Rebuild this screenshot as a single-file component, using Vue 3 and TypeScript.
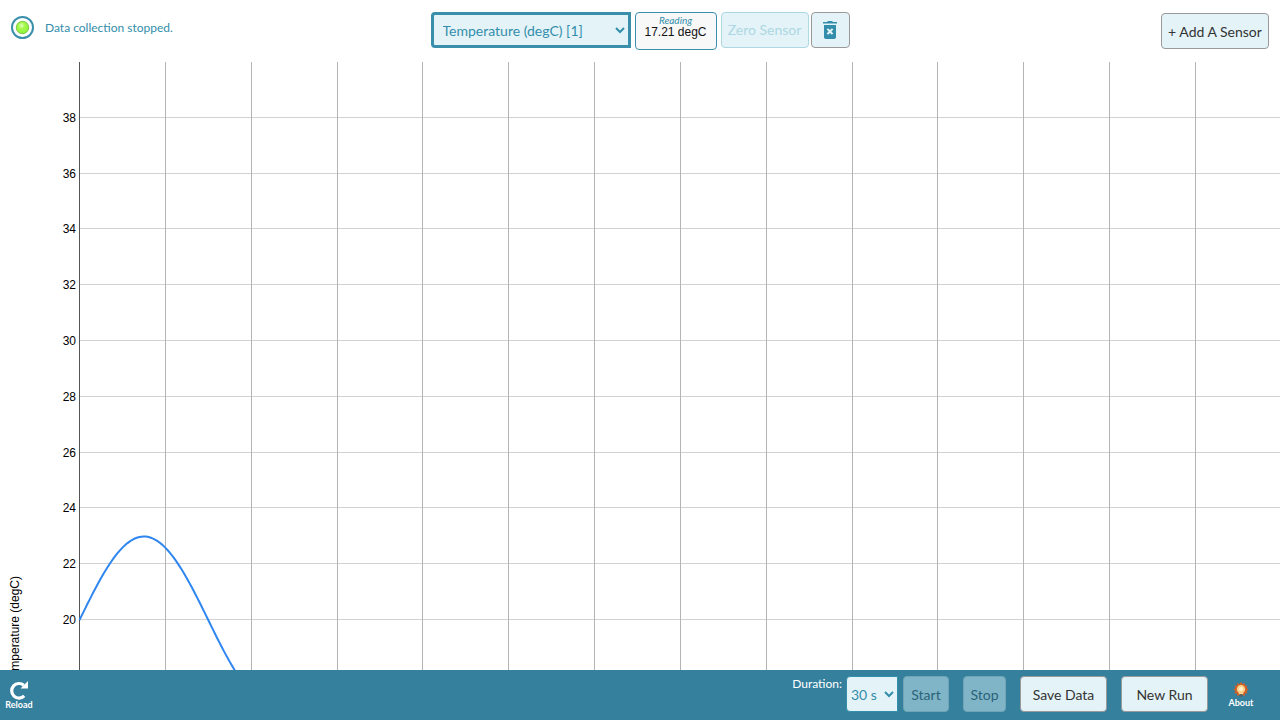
<script setup lang="ts">
import { ref } from 'vue'

const channel = ref('Temperature (degC) [1]')
const duration = ref('30 s')

const rows = Array.from({ length: 10 }, (_, i) => ({
  label: 38 - i * 2,
  y: Math.round(54.8 + i * 55.8) + 0.5,
}))
const columns = Array.from({ length: 30 }, (_, i) => Math.round(79.1 + i * 85.83) + 0.5)

const points: string[] = []
for (let x = 0; x <= 190; x += 2) {
  const y = 558 - 83.5 * Math.sin((x / 257.5) * Math.PI * 2)
  points.push(`${79.5 + x},${y.toFixed(2)}`)
}
const curve = points.join(' ')

const burst = Array.from({ length: 24 }, (_, i) => {
  const a = (i * Math.PI) / 12
  const r = i % 2 ? 5.8 : 7.6
  return `${(8 + r * Math.sin(a)).toFixed(2)},${(7.5 - r * Math.cos(a)).toFixed(2)}`
}).join(' ')
</script>

<template>
  <div class="app">
    <header class="top">
      <div class="status">
        <svg class="lamp" viewBox="0 0 24 24" aria-hidden="true">
          <defs>
            <radialGradient id="lampGlow" cx="0.42" cy="0.35" r="0.65">
              <stop offset="0" stop-color="#e4ffc4" />
              <stop offset="0.4" stop-color="#a4fa4c" />
              <stop offset="1" stop-color="#8ff03a" />
            </radialGradient>
          </defs>
          <circle cx="11.500" cy="11.500" r="10.500" fill="#fff" stroke="#3a8fab" stroke-width="2" />
          <circle cx="11.500" cy="11.500" r="6.200" fill="url(#lampGlow)" stroke="#7fc545" stroke-width="1" />
        </svg>
        <span>Data collection stopped.</span>
      </div>

      <div class="sensor">
        <select v-model="channel" class="channel" aria-label="Sensor channel">
          <option>Temperature (degC) [1]</option>
        </select>
        <div class="reading">
          <em>Reading</em>
          <span>17.21 degC</span>
        </div>
        <button class="btn zero" disabled>Zero Sensor</button>
        <button class="btn remove" aria-label="Remove sensor">
          <svg viewBox="0 0 16 20" aria-hidden="true">
            <path fill="#338eab" fill-rule="evenodd" d="M1 2h4l1-1h4l1 1h4v1.600H1zM2 5h12v12.200a1.800 1.800 0 0 1-1.800 1.800H3.800A1.800 1.800 0 0 1 2 17.200zM6.100 8.200 4.700 9.600 6.600 11.500 4.700 13.400 6.100 14.800 8 12.900 9.900 14.800 11.300 13.400 9.400 11.500 11.300 9.600 9.900 8.200 8 10.100z" />
          </svg>
        </button>
      </div>

      <button class="btn add">+ Add A Sensor</button>
    </header>

    <main class="plot">
      <svg class="chart" role="img" aria-label="Temperature (degC) chart">
        <g class="rows">
          <line v-for="r in rows" :key="r.label" x1="80" x2="100%" :y1="r.y" :y2="r.y" />
        </g>
        <g class="columns">
          <line v-for="x in columns" :key="x" :x1="x" :x2="x" y1="0" y2="100%" />
        </g>
        <line class="axis" x1="79.5" x2="79.5" y1="0" y2="100%" />
        <g class="labels">
          <text v-for="r in rows" :key="r.label" x="76" :y="r.y + 4">{{ r.label }}</text>
        </g>
        <text class="title" transform="translate(19 514) rotate(-90)">Temperature (degC)</text>
        <polyline class="curve" :points="curve" />
      </svg>
    </main>

    <footer class="bottom">
      <button class="tool reload">
        <svg viewBox="0 0 20 20" aria-hidden="true">
          <path d="M15.200 15.900A7.300 7.300 0 1 1 14.800 5.300" fill="none" stroke="#fff" stroke-width="3.200" />
          <path d="M19 1v7.500h-7.500z" fill="#fff" />
        </svg>
        <span>Reload</span>
      </button>
      <div class="controls">
        <label for="duration">Duration:</label>
        <select id="duration" v-model="duration" class="duration">
          <option>30 s</option>
        </select>
        <button class="btn start" disabled>Start</button>
        <button class="btn stop" disabled>Stop</button>
        <button class="btn wide">Save Data</button>
        <button class="btn wide">New Run</button>
        <button class="tool about">
          <svg viewBox="0 0 16 16" aria-hidden="true">
            <polygon :points="burst" fill="#d0602a" />
            <path d="M8 3a4.200 4.200 0 0 0-2.200 7.700v1.500h4.400v-1.500a4.200 4.200 0 0 0-2.200-7.700z" fill="#ffd48a" />
            <circle cx="8" cy="7" r="2" fill="#fff3cf" />
            <path d="M6.500 12.200h3v2.500h-3z" fill="#4e6168" />
          </svg>
          <span>About</span>
        </button>
      </div>
    </footer>
  </div>
</template>

<style>
body {
  margin: 0;
  overflow: hidden;
}
</style>

<style scoped>
.app {
  display: flex;
  flex-direction: column;
  height: 100vh;
  background: #fff;
  color: #338eab;
  font-family: Lato, "Liberation Sans", sans-serif;
  font-size: 14px;
}
.top {
  display: grid;
  grid-template-columns: 1fr auto 1fr;
  align-items: start;
  flex: none;
  height: 50px;
  padding: 12px 11px 0;
}
.status {
  display: flex;
  align-items: center;
  gap: 10px;
  height: 31px;
  font-size: 12px;
}
.lamp {
  width: 24px;
  height: 24px;
}
.sensor {
  display: flex;
  gap: 4px;
}
.btn,
select {
  box-sizing: border-box;
  height: 36px;
  margin: 0;
  padding: 0;
  border: 1px solid #999;
  border-radius: 4px;
  background: #e4f3f8;
  color: #333;
  font-family: inherit;
  font-size: 14px;
}
select {
  appearance: none;
  background: #e4f3f8 url("data:image/svg+xml,%3Csvg xmlns='http://www.w3.org/2000/svg' viewBox='0 0 10 8'%3E%3Cpath d='M1 2l4 4 4-4' fill='none' stroke='%23338eab' stroke-width='2'/%3E%3C/svg%3E") no-repeat right 3px center / 10px 8px;
  color: #338eab;
}
.channel {
  width: 200px;
  padding-left: 9px;
  border: 3px solid #3a8fab;
  border-radius: 4px 0 0 4px;
}
.reading {
  box-sizing: border-box;
  display: flex;
  flex-direction: column;
  align-items: center;
  width: 82px;
  height: 38px;
  padding-top: 2px;
  border: 1px solid #3a8fab;
  border-radius: 4px;
  background: #f8f8f8;
  color: #111;
  font-family: "Liberation Sans", Arial, sans-serif;
  font-size: 12px;
  line-height: 14px;
}
.reading em {
  color: #338eab;
  font-family: Lato, sans-serif;
  font-size: 10px;
  line-height: 10px;
}
.zero {
  width: 88px;
  padding-bottom: 2px;
  border-color: #acd8e3;
  color: #acd8e3;
}
.remove {
  display: flex;
  align-items: center;
  justify-content: center;
  width: 39px;
  margin-left: -2px;
}
.remove svg {
  width: 16px;
  height: 20px;
}
.add {
  justify-self: end;
  width: 108px;
  margin-top: 1px;
}
.plot {
  flex: 1;
  min-height: 0;
  overflow: hidden;
}
.chart {
  display: block;
  width: 100%;
  height: 100%;
  font-family: "Liberation Sans", Arial, sans-serif;
  font-size: 12px;
}
.rows line {
  stroke: #d2d2d2;
}
.columns line {
  stroke: #b4b4b4;
}
.axis {
  stroke: #555;
}
.labels text {
  fill: #000;
  text-anchor: end;
}
.title {
  fill: #000;
  text-anchor: end;
}
.curve {
  fill: none;
  stroke: #2f86f0;
  stroke-width: 2;
}
.bottom {
  display: flex;
  justify-content: space-between;
  flex: none;
  height: 50px;
  background: #35809d;
  color: #fff;
}
.controls {
  display: flex;
  align-items: flex-start;
  padding-top: 6px;
}
.controls label {
  margin-right: 4px;
  font-size: 12px;
  line-height: 16px;
}
.duration {
  width: 52px;
  padding-left: 4px;
  border: 1px solid #338eab;
  border-radius: 4px 0 0 4px;
}
.start,
.stop {
  border-color: #6fa5b7;
  background: #80b5c7;
  color: #2b6379;
}
.start {
  width: 46px;
  margin-left: 5px;
}
.stop {
  width: 43px;
  margin-left: 14px;
}
.wide {
  width: 87px;
  margin-left: 14px;
}
.tool {
  display: flex;
  flex-direction: column;
  align-items: center;
  padding: 0;
  border: 0;
  background: none;
  color: #fff;
  font-family: inherit;
  font-size: 9px;
  font-weight: 700;
  line-height: 10px;
}
.reload {
  width: 38px;
  padding-top: 10px;
}
.reload svg {
  width: 20px;
  height: 20px;
}
.about {
  width: 66px;
  margin-right: 6px;
  padding-top: 6px;
}
.about svg {
  width: 16px;
  height: 16px;
}
</style>
